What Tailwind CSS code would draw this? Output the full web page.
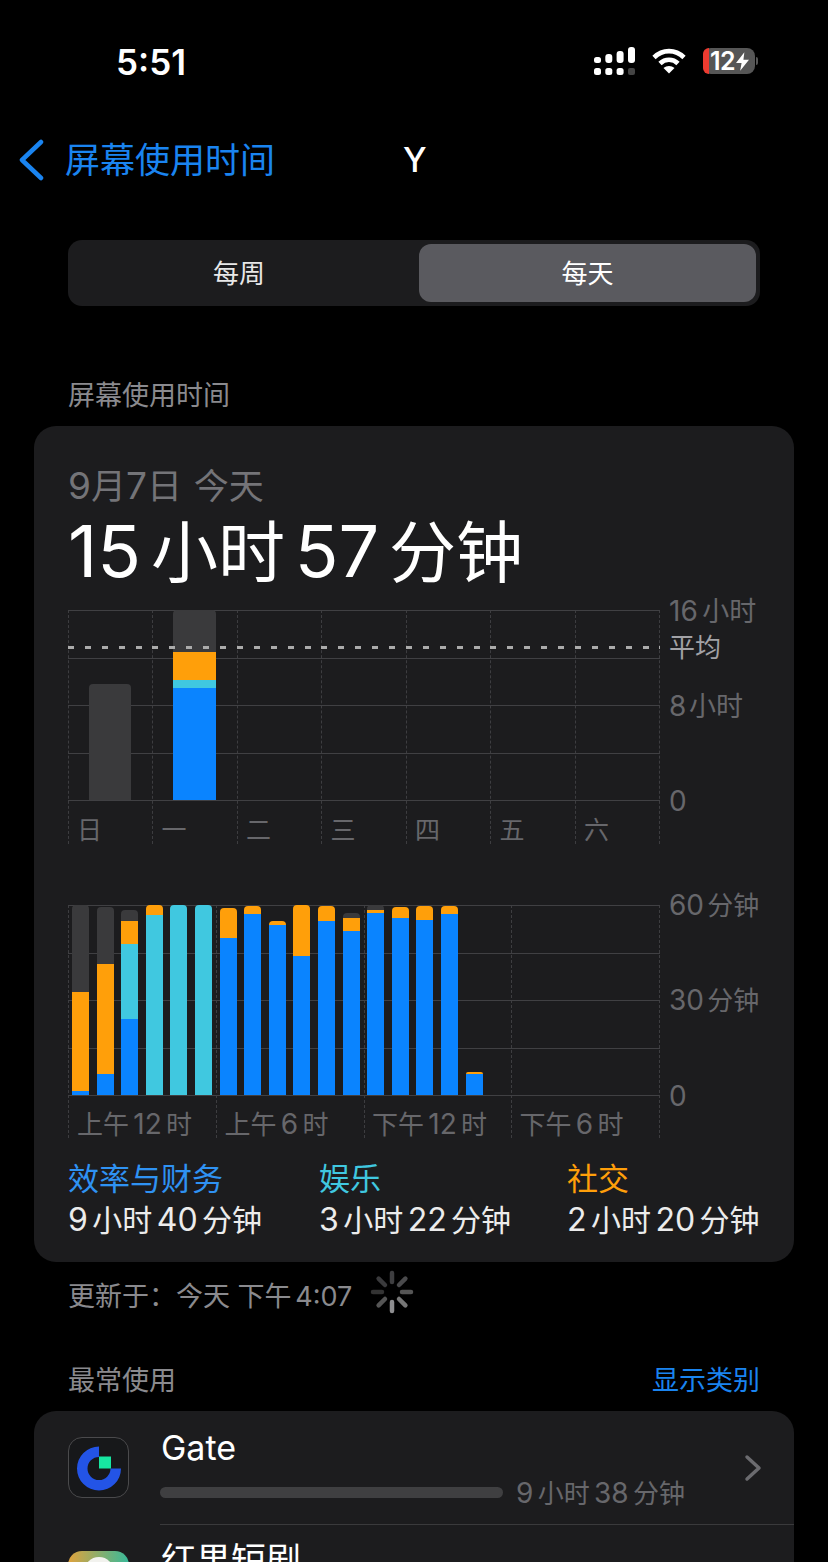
<!DOCTYPE html>
<html lang="zh">
<head>
  <meta charset="UTF-8" />
  <title>屏幕使用时间</title>
  <script src="https://cdn.jsdelivr.net/npm/@tailwindcss/browser@4"></script>
</head>
<body class="bg-black text-white font-['Inter','Noto_Sans_CJK_SC',sans-serif] overflow-hidden">
<div class="w-[828px] h-[1562px] overflow-hidden bg-black">

  <!-- Status bar -->
  <div class="h-[122px] pl-[116px] pr-[73px] pt-[40px] flex justify-between items-start">
    <span class="text-[35px] leading-[44px] font-semibold">5:51</span>
    <div class="flex items-center gap-[17px] pt-[7px]">
      <svg width="41" height="28" viewBox="0 0 41 28" fill="#fff">
        <rect x="0" y="10" width="7" height="6" rx="2.500"/><rect x="11.300" y="7" width="7" height="9" rx="3"/><rect x="22.600" y="4" width="7" height="12" rx="3"/><rect x="34" y="0" width="7" height="16" rx="3"/>
        <rect x="0" y="21" width="7" height="7" rx="2.500"/><rect x="11.300" y="21" width="7" height="7" rx="2.500"/><rect x="22.600" y="21" width="7" height="7" rx="2.500"/><rect x="34" y="21" width="7" height="7" rx="2" fill="#444"/>
      </svg>
      <svg width="34" height="26" viewBox="0 0 34 26" fill="none" stroke="#fff" stroke-width="4.600">
        <path d="M2 9.500C10.500 1 23.500 1 32 9.500"/><path d="M8 15.500C13 10.500 21 10.500 26 15.500"/><path d="M17 25.500L11.500 20C14.500 17.300 19.500 17.300 22.500 20Z" fill="#fff" stroke="none"/>
      </svg>
      <div class="relative">
        <div class="w-[52px] h-[26px] rounded-[8px] bg-[#565656] flex items-center">
          <div class="w-[6px] h-full rounded-l-[8px] bg-[#ec3b30] shrink-0"></div>
          <span class="text-[25px] leading-[26px] font-semibold ml-[1px] tracking-[-0.5px]">12</span>
          <svg class="ml-[1px]" width="13" height="19" viewBox="0 0 14 20" fill="#fff"><path d="M9 0L0 11.500H6L4.500 20L14 8H8Z"/></svg>
        </div>
        <div class="absolute -right-[3px] top-[9px] w-[2px] h-[8px] rounded-r-full bg-[#565656]"></div>
      </div>
    </div>
  </div>

  <!-- Nav -->
  <div class="h-[76px] relative flex items-center pl-[18px]">
    <svg width="26" height="42" viewBox="0 0 26 42" fill="none" stroke="#1a84f0" stroke-width="4.500" stroke-linecap="round" stroke-linejoin="round"><path d="M23 3L4 21L23 39"/></svg>
    <span class="ml-[21px] text-[35px] leading-[44px] text-[#1a84f0]">屏幕使用时间</span>
    <span class="absolute left-[403px] top-[16px] text-[34px] leading-[44px] font-medium">Y</span>
  </div>

  <!-- Segmented -->
  <div class="mx-[68px] mt-[42px] h-[66px] rounded-[14px] bg-[#1c1c1e] p-[4px] flex items-stretch">
    <div class="w-[334px] text-center text-[26px] leading-[60px] text-[#e8e8e8]">每周</div>
    <div class="ml-[13px] flex-1 rounded-[12px] bg-[#5a5a5f] text-center text-[26px] leading-[60px]">每天</div>
  </div>

  <!-- Section title -->
  <div class="mt-[73px] pl-[68px] text-[27px] leading-[34px] text-[#8a8a8e]">屏幕使用时间</div>

  <!-- Summary card -->
  <div class="mx-[34px] mt-[13px] h-[836px] rounded-[22px] bg-[#1c1c1e] pl-[34px] pt-[38px]">
    <div class="text-[35px] leading-[44px] text-[#747478] [word-spacing:2px]"><span class="text-[37px]">9</span>月<span class="text-[37px]">7</span>日 今天</div>
    <div class="text-[67px] leading-[78px] mt-[4px] [word-spacing:-9px]"><span class="text-[72px]">15</span> 小时 <span class="text-[72px]">57</span> 分钟</div>

    <!-- Week chart -->
    <div class="relative mt-[18px] h-[234px] w-[700px]">
      <!-- vertical grid -->
      <div class="absolute inset-y-0 left-0 w-[592px] flex justify-between">
        <i class="border-l border-dashed border-[#3d3d40]"></i><i class="border-l border-dashed border-[#3d3d40]"></i><i class="border-l border-dashed border-[#3d3d40]"></i><i class="border-l border-dashed border-[#3d3d40]"></i><i class="border-l border-dashed border-[#3d3d40]"></i><i class="border-l border-dashed border-[#3d3d40]"></i><i class="border-l border-dashed border-[#3d3d40]"></i><i class="border-l border-dashed border-[#3d3d40]"></i>
      </div>
      <!-- horizontal grid -->
      <div class="absolute top-0 left-0 w-[592px] h-[191px] flex flex-col justify-between">
        <i class="block h-px bg-[#404043]"></i><i class="block h-px bg-[#404043]"></i><i class="block h-px bg-[#404043]"></i><i class="block h-px bg-[#404043]"></i><i class="block h-px bg-[#404043]"></i>
      </div>
      <!-- bars -->
      <div class="absolute top-0 left-[21px] h-[190px] flex items-end gap-[42px]">
        <div class="w-[42px] h-[116px] rounded-t-[4px] bg-[#3a3a3c]"></div>
        <div class="w-[43px] h-[190px] rounded-t-[4px] overflow-hidden flex flex-col">
          <div class="h-[42px] bg-[#3a3a3c]"></div>
          <div class="h-[28px] bg-[#ff9f0a]"></div>
          <div class="h-[8px] bg-[#40c8e0]"></div>
          <div class="h-[112px] bg-[#0a84ff]"></div>
        </div>
      </div>
      <!-- average line -->
      <div class="absolute left-0 top-[36px] w-[592px] h-[3px] bg-[repeating-linear-gradient(90deg,#ababab_0,#ababab_6px,transparent_6px,transparent_16.900px)]"></div>
      <!-- y labels -->
      <span class="absolute left-[601px] -top-[15px] text-[27px] leading-[32px] text-[#67676b] [word-spacing:-3px]"><span class="text-[28px]">16</span> 小时</span>
      <span class="absolute left-[601px] top-[22px] text-[26px] leading-[32px] text-[#a2a2a6]">平均</span>
      <span class="absolute left-[601px] top-[80px] text-[27px] leading-[32px] text-[#67676b] [word-spacing:-5px]"><span class="text-[28px]">8</span> 小时</span>
      <span class="absolute left-[601px] top-[175px] text-[28px] leading-[32px] text-[#67676b]">0</span>
      <!-- day labels -->
      <div class="absolute left-[9px] top-[204px] flex text-[25px] leading-[32px] text-[#67676b]">
        <span class="w-[84.500px]">日</span><span class="w-[84.500px]">一</span><span class="w-[84.500px]">二</span><span class="w-[84.500px]">三</span><span class="w-[84.500px]">四</span><span class="w-[84.500px]">五</span><span>六</span>
      </div>
    </div>

    <!-- Day chart -->
    <div class="relative mt-[61px] h-[233px] w-[700px]">
      <div class="absolute inset-y-0 left-0 w-[592px] flex justify-between">
        <i class="border-l border-dashed border-[#3d3d40]"></i><i class="border-l border-dashed border-[#3d3d40]"></i><i class="border-l border-dashed border-[#3d3d40]"></i><i class="border-l border-dashed border-[#3d3d40]"></i><i class="border-l border-dashed border-[#3d3d40]"></i>
      </div>
      <div class="absolute top-0 left-0 w-[592px] h-[191px] flex flex-col justify-between">
        <i class="block h-px bg-[#404043]"></i><i class="block h-px bg-[#404043]"></i><i class="block h-px bg-[#404043]"></i><i class="block h-px bg-[#404043]"></i><i class="block h-px bg-[#404043]"></i>
      </div>
      <div class="absolute top-0 left-[4px] h-[190px] flex items-end gap-[7.600px]">
        <div class="w-[17px] rounded-t-[4px] overflow-hidden flex flex-col"><div class="h-[87px] bg-[#3a3a3c]"></div><div class="h-[99px] bg-[#ff9f0a]"></div><div class="h-[4px] bg-[#0a84ff]"></div></div>
        <div class="w-[17px] rounded-t-[4px] overflow-hidden flex flex-col"><div class="h-[57px] bg-[#3a3a3c]"></div><div class="h-[110px] bg-[#ff9f0a]"></div><div class="h-[21px] bg-[#0a84ff]"></div></div>
        <div class="w-[17px] rounded-t-[4px] overflow-hidden flex flex-col"><div class="h-[11px] bg-[#3a3a3c]"></div><div class="h-[23px] bg-[#ff9f0a]"></div><div class="h-[75px] bg-[#40c8e0]"></div><div class="h-[76px] bg-[#0a84ff]"></div></div>
        <div class="w-[17px] rounded-t-[4px] overflow-hidden flex flex-col"><div class="h-[10px] bg-[#ff9f0a]"></div><div class="h-[180px] bg-[#40c8e0]"></div></div>
        <div class="w-[17px] h-[190px] rounded-t-[4px] bg-[#40c8e0]"></div>
        <div class="w-[17px] h-[190px] rounded-t-[4px] bg-[#40c8e0]"></div>
        <div class="w-[17px] rounded-t-[4px] overflow-hidden flex flex-col"><div class="h-[30px] bg-[#ff9f0a]"></div><div class="h-[157px] bg-[#0a84ff]"></div></div>
        <div class="w-[17px] rounded-t-[4px] overflow-hidden flex flex-col"><div class="h-[8px] bg-[#ff9f0a]"></div><div class="h-[181px] bg-[#0a84ff]"></div></div>
        <div class="w-[17px] rounded-t-[4px] overflow-hidden flex flex-col"><div class="h-[4px] bg-[#ff9f0a]"></div><div class="h-[170px] bg-[#0a84ff]"></div></div>
        <div class="w-[17px] rounded-t-[4px] overflow-hidden flex flex-col"><div class="h-[51px] bg-[#ff9f0a]"></div><div class="h-[139px] bg-[#0a84ff]"></div></div>
        <div class="w-[17px] rounded-t-[4px] overflow-hidden flex flex-col"><div class="h-[15px] bg-[#ff9f0a]"></div><div class="h-[174px] bg-[#0a84ff]"></div></div>
        <div class="w-[17px] rounded-t-[4px] overflow-hidden flex flex-col"><div class="h-[5px] bg-[#3a3a3c]"></div><div class="h-[13px] bg-[#ff9f0a]"></div><div class="h-[164px] bg-[#0a84ff]"></div></div>
        <div class="w-[17px] rounded-t-[4px] overflow-hidden flex flex-col"><div class="h-[5px] bg-[#3a3a3c]"></div><div class="h-[3px] bg-[#ff9f0a]"></div><div class="h-[182px] bg-[#0a84ff]"></div></div>
        <div class="w-[17px] rounded-t-[4px] overflow-hidden flex flex-col"><div class="h-[11px] bg-[#ff9f0a]"></div><div class="h-[177px] bg-[#0a84ff]"></div></div>
        <div class="w-[17px] rounded-t-[4px] overflow-hidden flex flex-col"><div class="h-[14px] bg-[#ff9f0a]"></div><div class="h-[175px] bg-[#0a84ff]"></div></div>
        <div class="w-[17px] rounded-t-[4px] overflow-hidden flex flex-col"><div class="h-[8px] bg-[#ff9f0a]"></div><div class="h-[181px] bg-[#0a84ff]"></div></div>
        <div class="w-[17px] rounded-t-[2px] overflow-hidden flex flex-col"><div class="h-[2px] bg-[#ff9f0a]"></div><div class="h-[21px] bg-[#0a84ff]"></div></div>
      </div>
      <span class="absolute left-[601px] -top-[16px] text-[26px] leading-[32px] text-[#67676b] [word-spacing:-4px]"><span class="text-[28px]">60</span> 分钟</span>
      <span class="absolute left-[601px] top-[79px] text-[26px] leading-[32px] text-[#67676b] [word-spacing:-4px]"><span class="text-[28px]">30</span> 分钟</span>
      <span class="absolute left-[601px] top-[175px] text-[28px] leading-[32px] text-[#67676b]">0</span>
      <div class="absolute left-[9px] top-[203px] flex text-[26px] leading-[32px] text-[#67676b] [word-spacing:-3px]">
        <span class="w-[147.500px]">上午 <span class="text-[28px]">12</span> 时</span><span class="w-[147.500px]">上午 <span class="text-[28px]">6</span> 时</span><span class="w-[147.500px]">下午 <span class="text-[28px]">12</span> 时</span><span>下午 <span class="text-[28px]">6</span> 时</span>
      </div>
    </div>

    <!-- Legend -->
    <div class="mt-[22px] flex">
      <div class="w-[251px]">
        <div class="text-[31px] leading-[38px] text-[#2f92f3]">效率与财务</div>
        <div class="mt-[2px] text-[30px] leading-[40px] text-[#ececec] [word-spacing:-4px]"><span class="text-[32px]">9</span> 小时 <span class="text-[32px]">40</span> 分钟</div>
      </div>
      <div class="w-[248px]">
        <div class="text-[31px] leading-[38px] text-[#40c8e0]">娱乐</div>
        <div class="mt-[2px] text-[30px] leading-[40px] text-[#ececec] [word-spacing:-4px]"><span class="text-[32px]">3</span> 小时 <span class="text-[32px]">22</span> 分钟</div>
      </div>
      <div>
        <div class="text-[31px] leading-[38px] text-[#ff9f0a]">社交</div>
        <div class="mt-[2px] text-[30px] leading-[40px] text-[#ececec] [word-spacing:-4px]"><span class="text-[32px]">2</span> 小时 <span class="text-[32px]">20</span> 分钟</div>
      </div>
    </div>
  </div>

  <!-- Updated -->
  <div class="mt-[12px] pl-[68px] h-[46px] flex items-center">
    <span class="text-[27px] leading-[44px] text-[#8a8a8e]">更新于：今天 下午 <span class="-ml-[4px]">4:07</span></span>
    <svg class="ml-[18px] -mt-[10px]" width="44" height="44" viewBox="0 0 44 44" stroke-width="4.500" stroke-linecap="round">
      <path d="M22 3V12" stroke="#3e3e40"/><path d="M35.400 8.600L29 15" stroke="#4a4a4c"/><path d="M41 22H32" stroke="#555"/><path d="M35.400 35.400L29 29" stroke="#777"/><path d="M22 41V32" stroke="#8e8e90"/><path d="M8.600 35.400L15 29" stroke="#555"/><path d="M3 22H12" stroke="#333"/><path d="M8.600 8.600L15 15" stroke="#3a3a3c"/>
    </svg>
  </div>

  <!-- Most used header -->
  <div class="mt-[44px] pl-[68px] pr-[68px] flex justify-between">
    <span class="text-[27px] leading-[34px] text-[#8a8a8e]">最常使用</span>
    <span class="text-[27px] leading-[34px] text-[#1a84f0]">显示类别</span>
  </div>

  <!-- App list -->
  <div class="mx-[34px] mt-[13px] rounded-t-[22px] bg-[#1c1c1e] h-[200px] overflow-hidden">
    <div class="flex pl-[34px]">
      <div class="mt-[26px] w-[61px] h-[61px] shrink-0 rounded-[14px] border border-[#4a4a4c] bg-[#17181a] flex items-center justify-center">
        <svg width="46" height="46" viewBox="0 0 46 46">
          <path d="M23 1.500A22 22 0 1 0 45 23.500H34.500A11.500 11.500 0 1 1 23 12Z" fill="#2354e6"/>
          <rect x="23" y="11.500" width="12" height="12" fill="#17e6a1"/>
        </svg>
      </div>
      <div class="ml-[31px] flex-1">
        <div class="h-[114px] border-b border-[#3a3a3c] relative">
          <div class="pl-[1px] pt-[16px] text-[34px] leading-[42px]">Gate</div>
          <div class="absolute left-0 top-[76px] w-[343px] h-[11px] rounded-full bg-[#3f3f41]"></div>
          <span class="absolute left-[356px] top-[65px] text-[26px] leading-[34px] text-[#67676b] [word-spacing:-3px]"><span class="text-[28px]">9</span> 小时 <span class="text-[28px]">38</span> 分钟</span>
          <svg class="absolute left-[584px] top-[43px]" width="18" height="28" viewBox="0 0 18 28" fill="none" stroke="#6b6b6f" stroke-width="3.500" stroke-linecap="round" stroke-linejoin="round"><path d="M3 3L15 14L3 25"/></svg>
        </div>
        <div class="pl-[1px] pt-[14px] text-[35px] leading-[42px]">红果短剧</div>
      </div>
    </div>
    <div class="-mt-[30px] ml-[34px] w-[61px] h-[61px] rounded-[14px] bg-[linear-gradient(90deg,#e0a23c,#38b99a)] relative overflow-hidden">
      <div class="absolute left-[16px] top-[6px] w-[30px] h-[30px] rounded-full bg-[#f2f2ee]"></div>
    </div>
  </div>
</div>
</body>
</html>
